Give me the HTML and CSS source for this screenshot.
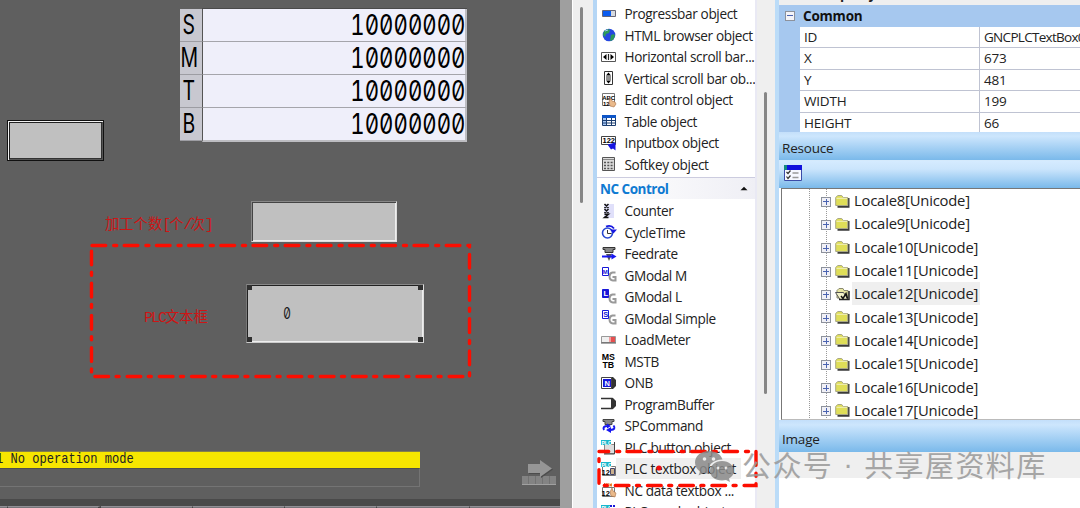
FILE: index.html
```
<!DOCTYPE html>
<html lang="zh-CN">
<head>
    <meta charset="UTF-8">
    <meta name="viewport" content="width=device-width, initial-scale=1.0">
    <title>Screen Editor</title>
    <link rel="stylesheet" href="styles.css">
</head>
<body>
<div class="editor">

  <!-- Screen canvas -->
  <div class="canvas">
    <div class="counter-table">
      <div class="row"><b class="key"><i>S</i></b><span class="val"><i>10000000</i></span></div>
      <div class="row"><b class="key"><i>M</i></b><span class="val"><i>10000000</i></span></div>
      <div class="row"><b class="key"><i>T</i></b><span class="val"><i>10000000</i></span></div>
      <div class="row"><b class="key"><i>B</i></b><span class="val"><i>10000000</i></span></div>
    </div>
    <div class="plc-button"></div>
    <div class="canvas-label label-count">加工个数<span>[</span>个<span>/</span>次<span>]</span></div>
    <div class="input-box"></div>
    <div class="canvas-label label-plc"><span>PLC</span>文本框</div>
    <div class="text-box"><i>0</i>
      <span class="handle tl"></span><span class="handle tr"></span>
      <span class="handle bl"></span><span class="handle br"></span>
    </div>
    <div class="message"><i>1 No operation mode</i></div>
    <div class="message-empty"></div>
    <svg class="next-icon" width="36" height="27" viewBox="0 0 36 27">
      <path d="M0 16h34v9H0z" fill="#838383"/>
      <path d="M6.500 16v8M13.500 16v8M20.500 16v8M27.500 16v8" stroke="#727272"/>
      <path d="M0 24.500h34" stroke="#a0a0a0"/>
      <path d="M6 4h12V0l12 8.500-12 8.500v-4H6z" fill="#4c4c4c" transform="translate(1 1)"/>
      <path d="M6 4h12V0l12 8.500-12 8.500v-4H6z" fill="#969696"/>
    </svg>
    <div class="softkeys"><span></span><span></span><span></span><span></span><span></span><span></span><span></span></div>
  </div>

  <div class="canvas-edge"></div>
  <div class="canvas-scroll"><div class="thumb"></div></div>

  <!-- Toolbox -->
  <div class="toolbox">
    <div class="tool-list">
      <div class="tool"><svg viewBox="0 0 16 16"><path d="M1.500 4.500h13v6h-13z" fill="#d5d9df" stroke="#667"/><path d="M2 5h8v5H2z" fill="#0b5cf0"/></svg>Progressbar object</div>
      <div class="tool"><svg viewBox="0 0 16 16"><circle cx="8" cy="8" r="6.300" fill="#2448e0"/><path d="M3 4l4-2 2 1-1 3-3 1-1 3-2-2zM10 8l3-1 1 2-2 4-3 1z" fill="#2c9a58"/><path d="M4 4l3-1" stroke="#9fd0ef"/></svg>HTML browser object</div>
      <div class="tool"><svg viewBox="0 0 16 16"><path d="M.5 3.500h14v9H.5z" fill="#fff" stroke="#555"/><path d="M5.500 5v6L2 8zM9.500 5v6L13 8z"/><path d="M7.500 5v6" stroke="#222" stroke-width="1.200"/></svg>Horizontal scroll bar...</div>
      <div class="tool"><svg viewBox="0 0 16 16"><path d="M3.500 1.500h8v13h-8z" fill="#fff" stroke="#333"/><path d="M5 5.500h5L7.500 2.500zM5 10.500h5l-2.500 3z"/><path d="M5 7h5M5 9h5" stroke="#222"/></svg>Vertical scroll bar ob...</div>
      <div class="tool"><svg viewBox="0 0 16 16"><path d="M1.500 1.500h12v12h-12z" fill="#fff" stroke="#777"/><text x="1.200" y="7.500">ABC</text><text x="2" y="13.500">12</text><path d="M9 14l-1-4 1-4 2 3 3 1 1 2-2 3z" fill="#e9b98a" stroke="#a86e45" stroke-width=".6"/></svg>Edit control object</div>
      <div class="tool"><svg viewBox="0 0 16 16"><path d="M1.500 2.500h13v10h-13z" fill="#fff" stroke="#1d3e70"/><path d="M1 2h14v3H1z" fill="#0d55c7"/><path d="M2 5h3v7H2z" fill="#a8c9f7"/><path d="M1 7.500h14M1 10h14M5.500 5v7M10.500 5v7" stroke="#1d3e70"/></svg>Table object</div>
      <div class="tool"><svg viewBox="0 0 16 16"><path d="M.5 1.500h14v8H.5z" fill="#fff" stroke="#444"/><text class="mid" x="1.500" y="8">122</text><path d="M6.500 9.500l8-2v8l-2.500-2-2 1z" fill="#1515e0"/></svg>Inputbox object</div>
      <div class="tool"><svg viewBox="0 0 16 16"><path d="M1.500 1.500h12v13h-12z" fill="#ddd" stroke="#555"/><path d="M2 3.500h11" stroke="#888"/><path d="M3 6.500h10M3 9.500h10M3 12.500h10" stroke="#555" stroke-width="1.500" stroke-dasharray="2 1.300"/></svg>Softkey object</div>
    </div>
    <div class="tool-head">NC Control<svg width="8" height="5" viewBox="0 0 8 5"><path d="M.5 4.200L4 .8l3.500 3.400z"/></svg></div>
    <div class="tool-list">
      <div class="tool"><svg viewBox="0 0 16 16"><path d="M3 1h10v14H3z" fill="#e0e0fa"/><path d="M3.500 1l4 4m0-4l-4 4M3.500 6l4 4m0-4l-4 4M3.500 11.200h4l-4 3.300h4" fill="none" stroke="#111" stroke-width="1.500"/></svg>Counter</div>
      <div class="tool"><svg viewBox="0 0 16 16"><circle cx="6.500" cy="9" r="5" fill="#fff" stroke="#2848d0" stroke-width="1.600"/><path d="M6.500 6v3.500h4" fill="none" stroke="#333"/><path d="M5 2.500q5-2 8 2" fill="none" stroke="#1717e0" stroke-width="1.800"/><path d="M9 5.500h7L12.500 9.500z" fill="#1717e0"/></svg>CycleTime</div>
      <div class="tool"><svg viewBox="0 0 16 16"><path d="M2 1.500h12v2h-2v3H4v-3H2z" fill="#888" stroke="#333"/><path d="M5 8h6l-3 7z" fill="#555"/><path d="M1 10.500h11" stroke="#1717f0" stroke-width="2"/><path d="M10.500 7.500l5 3-5 3z" fill="#1717f0"/></svg>Feedrate</div>
      <div class="tool"><svg viewBox="0 0 16 16"><path d="M14.500 5.500h-3q-3 .5-3 4t3.500 4h2.500v-3.500h-3" fill="none" stroke="#999" stroke-width="2"/><path d="M1.500.5h6v8h-6z" fill="#fff" stroke="#1717d8"/><text class="blue" x="1.800" y="7.200">M</text></svg>GModal M</div>
      <div class="tool"><svg viewBox="0 0 16 16"><path d="M14.500 5.500h-3q-3 .5-3 4t3.500 4h2.500v-3.500h-3" fill="none" stroke="#999" stroke-width="2"/><path d="M1.500.5h6v8h-6z" fill="#1717d8" stroke="#1717d8"/><text class="white mid" x="2.500" y="7.200">L</text></svg>GModal L</div>
      <div class="tool"><svg viewBox="0 0 16 16"><path d="M14.500 5.500h-3q-3 .5-3 4t3.500 4h2.500v-3.500h-3" fill="none" stroke="#999" stroke-width="2"/><path d="M1.500.5h6v8h-6z" fill="#fff" stroke="#1717d8"/><text class="blue mid" x="2.200" y="7.200">S</text></svg>GModal Simple</div>
      <div class="tool"><svg viewBox="0 0 16 16"><path d="M.5 4.500h14v6H.5z" fill="#f0f0f0" stroke="#999"/><path d="M8 5h6v5H8z" fill="#f0a0a0"/><path d="M10 5h4v5h-4z" fill="#e65050"/><path d="M0 11h15" stroke="#555"/></svg>LoadMeter</div>
      <div class="tool"><svg viewBox="0 0 16 16"><text class="big" x=".8" y="7.300">MS</text><text class="big" x="1.500" y="14.800">TB</text></svg>MSTB</div>
      <div class="tool"><svg viewBox="0 0 16 16"><path d="M10 2h2l3 3v6l-3 3h-2z" fill="#333"/><path d="M.5 2.500h10v11H.5z" fill="#fff" stroke="#444"/><path d="M2 4h8v8H2z" fill="#1717d8"/><text class="white mid" x="3.500" y="10.500">N</text></svg>ONB</div>
      <div class="tool"><svg viewBox="0 0 16 16"><path d="M0 2.500h11v10H0" fill="none" stroke="#333" stroke-width="1.400"/><path d="M10 2h2l3 3v5l-3 3h-2z" fill="#333"/></svg>ProgramBuffer</div>
      <div class="tool"><svg viewBox="0 0 16 16"><path d="M2 1.500h11v2h-2v3H4v-3H2z" fill="#888" stroke="#444"/><path d="M12.500 7.500q3 4-3 4.500M3 12q-2-4 4-4" fill="none" stroke="#1717f0" stroke-width="2"/><path d="M10 9v6l-5-3zM6 5.500v5l4-2.500z" fill="#1717f0"/></svg>SPCommand</div>
      <div class="tool"><svg viewBox="0 0 16 16"><path d="M3.500 5.500h10v9h-10z" fill="#ddd" stroke="#888"/><path d="M13.500 3v12H3" fill="none" stroke="#444"/><path d="M0 1h10v5H0z" fill="#18b7cc"/><text class="white" x=".5" y="5.500">PLC</text></svg>PLC button object</div>
      <div class="tool active"><svg viewBox="0 0 16 16"><path d="M1.500 5.500h13v9h-13z" fill="#fff" stroke="#777"/><path d="M0 1h10v5H0z" fill="#18b7cc"/><text class="white" x=".5" y="5.500">PLC</text><text class="mid" x=".5" y="13.500">12</text><path d="M9.500 7.500h4v6h-4z" fill="#cbb08c" stroke="#446"/></svg><span>PLC textbox object</span></div>
      <div class="tool"><svg viewBox="0 0 16 16"><path d="M1.500 5.500h12v9h-12z" fill="#fff" stroke="#777"/><path d="M3 1h8v4H3z" fill="#e46b22"/><text class="white" x="4" y="5">NC</text><text class="mid" x=".5" y="13.500">12</text><path d="M10 14l-1-4 2-4 1 3 3 2-1 4z" fill="#e9b98a" stroke="#a86e45" stroke-width=".6"/></svg>NC data textbox ...</div>
      <div class="tool"><svg viewBox="0 0 16 16"><path d="M0 1h9v5H0z" fill="#18b7cc"/><text class="white" x=".5" y="5.500">PLC</text><path d="M9 2h5M10 5h5" stroke="#1717d8" stroke-width="2" stroke-dasharray="2 1"/></svg>PLC graph object</div>
    </div>
  </div>
  <div class="tool-scroll"><div class="thumb"></div></div>

  <!-- Property, resource and image panels -->
  <div class="side">
    <div class="prop-top"><span>Property</span></div>
    <div class="props">
      <div class="prop-group"><span class="minus"></span>Common</div>
      <div class="prop"><span>ID</span><span class="id">GNCPLCTextBox0</span></div>
      <div class="prop"><span>X</span><span>673</span></div>
      <div class="prop"><span>Y</span><span>481</span></div>
      <div class="prop"><span>WIDTH</span><span>199</span></div>
      <div class="prop"><span>HEIGHT</span><span>66</span></div>
    </div>
    <div class="panel-title resource-title">Resouce</div>
    <div class="panel-bar">
      <svg width="18" height="16" viewBox="0 0 18 16"><path d="M.5.500h17v15H.5z" fill="#f6f8ff" stroke="#3b4ba8"/><path d="M0 0h18v5H0z" fill="#1010dc"/><path d="M0 0h3v5H0z" fill="#148a80"/><path d="M2.500 7l1.500 1.500 2.500-3M2.500 11.500l1.500 2 2.500-3" fill="none" stroke="#333" stroke-width="1.200"/><path d="M8.500 8h6M8.500 12.500h6" stroke="#999" stroke-width="1.300"/></svg>
    </div>
    <div class="tree">
      <div class="node"><span class="plus"></span><svg><use href="#folder"/></svg><span>Locale8[Unicode]</span></div>
      <div class="node"><span class="plus"></span><svg><use href="#folder"/></svg><span>Locale9[Unicode]</span></div>
      <div class="node"><span class="plus"></span><svg><use href="#folder"/></svg><span>Locale10[Unicode]</span></div>
      <div class="node"><span class="plus"></span><svg><use href="#folder"/></svg><span>Locale11[Unicode]</span></div>
      <div class="node selected"><span class="plus"></span><svg><use href="#folder-open"/></svg><span>Locale12[Unicode]</span></div>
      <div class="node"><span class="plus"></span><svg><use href="#folder"/></svg><span>Locale13[Unicode]</span></div>
      <div class="node"><span class="plus"></span><svg><use href="#folder"/></svg><span>Locale14[Unicode]</span></div>
      <div class="node"><span class="plus"></span><svg><use href="#folder"/></svg><span>Locale15[Unicode]</span></div>
      <div class="node"><span class="plus"></span><svg><use href="#folder"/></svg><span>Locale16[Unicode]</span></div>
      <div class="node"><span class="plus"></span><svg><use href="#folder"/></svg><span>Locale17[Unicode]</span></div>
    </div>
    <div class="panel-title image-title">Image</div>
    <div class="image-bar"></div>
  </div>
</div>

<!-- Red marks over the editor -->
<svg class="marks" width="1080" height="508" viewBox="0 0 1080 508">
  <path d="M92 245.500H469.500V376.500H91.500V246" stroke-dasharray="13.700 8 3 7.500"/>
  <path d="M599 451.500H756V485.500H599V452" stroke-dasharray="13.700 8 3 7.500" stroke-dashoffset="4"/>
  <circle cx="659" cy="468" r="2.600"/>
</svg>

<div class="watermark">
  <svg width="42" height="32" viewBox="0 0 42 32">
    <path d="M15 1c-8 0-14 5-14 11.500 0 4 2 7 5 9l-1.500 4 5-2.500 5 1c-2-8 4-14.500 14-14.500C27 4.500 22 1 15 1z"/>
    <path d="M28 11c-7 0-12 4.500-12 10s5 9.500 12 9.500l4-.5 4 2-1-3.500c3-2 5-4.500 5-7.500 0-5.500-5-10-12-10z"/>
    <g class="eyes"><circle cx="10.500" cy="9" r="1.800"/><circle cx="19.500" cy="9" r="1.800"/><circle cx="24" cy="18" r="1.500"/><circle cx="32" cy="18" r="1.500"/></g>
  </svg>
  <span>公众号</span><span class="dot">·</span><span>共享屋资料库</span>
</div>

<svg class="defs" width="0" height="0">
  <symbol id="folder" viewBox="0 0 16 14">
    <path d="M2.500 12.800h11V4" fill="none" stroke="#3a3a3a" stroke-width="2"/>
    <path d="M.7 11.500V3.500l2-2h4l1.500 2h4.500v8z" fill="#dfde58" stroke="#a9a886"/>
    <path d="M1.500 4.300h10.500" stroke="#f2f1c0"/>
  </symbol>
  <symbol id="folder-open" viewBox="0 0 16 14">
    <path d="M2 11V3.500l2-2h4l1 2h4V11z" fill="#e7e5a0" stroke="#8a8a70"/>
    <path d="M.5 5.500h8l4.500 7H5z" fill="#f3f2c8" stroke="#555"/>
    <path d="M4 12.500h10V4" fill="none" stroke="#222" stroke-width="1.500"/>
    <path d="M6 9l2 2.500 3-5 1.500 5" fill="none" stroke="#111" stroke-width="1.500"/>
  </symbol>
</svg>
</body>
</html>
```

FILE: styles.css
```
* {
    box-sizing: border-box;
}

body {
    margin: 0;
    width: 1080px;
    height: 508px;
    overflow: hidden;
    font-family: "Open Sans", "Noto Sans", sans-serif;
    color: #222;
    background-color: #efefef;
}

i {
    font-style: normal;
    display: inline-block;
}

.editor {
    display: flex;
    height: 508px;
}

/* Screen canvas */
.canvas {
    position: relative;
    width: 560px;
    flex: none;
    overflow: hidden;
    background-color: #5f5f5f;
}

.canvas-edge {
    width: 12px;
    flex: none;
    background-color: #9f9f9f;
}

.canvas-scroll {
    width: 21px;
    flex: none;
    padding: 7px 0 0 7px;
    background-color: #efefef;
    border-left: 1px solid #fff;
}

.thumb {
    width: 3px;
    border-radius: 2px;
    background-color: #868686;
}

.canvas-scroll .thumb {
    height: 196px;
}

.counter-table {
    position: absolute;
    left: 180px;
    top: 9px;
    width: 287px;
    height: 134px;
    font-family: Inter, sans-serif;
    font-feature-settings: "zero", "tnum";
    color: #000;
}

.counter-table .row {
    display: flex;
    height: 33px;
}

.counter-table .key {
    width: 22px;
    font-weight: 400;
    font-size: 27px;
    line-height: 32px;
    text-align: center;
    background-color: #c8c8d0;
    border-bottom: 1px solid #9d9da3;
}

.counter-table .key i {
    transform: translateX(-2px) scaleX(.72);
    margin: 0 -6px;
}

.counter-table .val {
    flex: 1;
    text-align: right;
    font-size: 29px;
    line-height: 32px;
    background-color: #efeffa;
    border-left: 1px solid #555;
    border-right: 2px solid #bdbdc2;
    border-bottom: 1px solid #a5a5ab;
}

.counter-table .val i {
    transform: scaleX(.765);
    transform-origin: right;
}

.counter-table .row:first-child .val {
    box-shadow: 0 -1px #4a4a4a;
}

.counter-table .row:last-child .val {
    height: 34px;
    border-bottom: 2px solid #bdbdc2;
}

.plc-button {
    position: absolute;
    left: 7px;
    top: 120px;
    width: 97px;
    height: 41px;
    background-color: #c0c0c0;
    border: 1px solid #111;
    box-shadow: inset 1px 1px #f2f2f2, inset -1px -1px #555, inset 2px 2px #222, inset -2px -2px #333;
}

.input-box {
    position: absolute;
    left: 251px;
    top: 201px;
    width: 146px;
    height: 41px;
    background-color: #c0c0c0;
    border: 1px solid;
    border-color: #888 #ddd #ddd #888;
    box-shadow: inset 1px 1px #444, inset -1px -1px #eee;
}

.canvas-label {
    position: absolute;
    color: #cd1515;
    font-family: "Noto Sans CJK SC", sans-serif;
    font-size: 14.300px;
    font-weight: 400;
    line-height: 20px;
    white-space: nowrap;
}

.canvas-label span {
    font-family: "Liberation Mono", monospace;
    font-size: 15px;
    letter-spacing: -2px;
}

.label-count {
    left: 105px;
    top: 213px;
}

.label-plc {
    left: 144px;
    top: 306px;
}

.text-box {
    position: absolute;
    left: 246px;
    top: 284px;
    width: 178px;
    height: 59px;
    background-color: #c0c0c0;
    border: 1px solid;
    border-color: #888 #ddd #ccc #777;
    box-shadow: inset 1px 1px #222, inset -1px -1px #eee;
}

.text-box i {
    font: 16px/20px Inter, sans-serif;
    font-feature-settings: "zero";
    margin: 18px 0 0 35px;
    transform: scaleX(.75);
}

.handle {
    position: absolute;
    width: 5px;
    height: 5px;
    background-color: #303030;
}

.tl { left: 0; top: 0; }
.tr { right: 0; top: 0; }
.bl { left: 0; bottom: 0; }
.br { right: 0; bottom: 0; }

.message {
    position: absolute;
    left: 0;
    top: 451px;
    width: 420px;
    height: 17px;
    background-color: #f7e600;
    border-top: 1px solid #85804a;
    font: 15px/16px "Liberation Mono", monospace;
    color: #222;
    white-space: nowrap;
}

.message i {
    margin-left: -4px;
    transform: scaleX(.805);
    transform-origin: left;
}

.message-empty {
    position: absolute;
    left: -1px;
    top: 468px;
    width: 421px;
    height: 19px;
    border: 1px solid #747474;
    border-top-color: #4e4e4e;
}

.next-icon {
    position: absolute;
    left: 522px;
    top: 460px;
}

.softkeys {
    position: absolute;
    left: -84px;
    top: 499px;
    width: 654px;
    height: 9px;
    display: flex;
    background-color: #4a4a4a;
    padding-top: 7px;
}

.softkeys span {
    width: 92.300px;
    flex: none;
    background-color: #77757a;
    border-top: 1px solid #929096;
    border-right: 1px solid #444;
}

.softkeys span:nth-child(2) {
    border-right-width: 3px;
}

/* Toolbox */
.toolbox {
    width: 164px;
    flex: none;
    height: 508px;
    overflow: hidden;
    padding-top: 3px;
    background-color: #fff;
    border-left: 4px solid #b5d6f5;
    border-right: 2px solid #e9e9f4;
}

.tool {
    display: flex;
    align-items: center;
    height: 21.500px;
    padding-left: 4px;
    font-size: 13.600px;
    letter-spacing: -.360px;
    white-space: nowrap;
}

.tool svg {
    width: 16px;
    height: 16px;
    flex: none;
    margin-right: 7.500px;
}

.tool text {
    font: bold 6px "Liberation Sans", sans-serif;
    letter-spacing: 0;
}

.tool text.big {
    font-size: 8.800px;
}

.tool .blue {
    fill: #1717d8;
}

.tool .white {
    fill: #fff;
    font-size: 5px;
}

.tool text.mid {
    font-size: 7.500px;
}

.tool.active span {
    height: 21px;
    line-height: 21px;
    margin-left: -9px;
    padding: 0 5px 0 9px;
    background-color: #efefef;
}

.tool-head {
    display: flex;
    align-items: center;
    justify-content: space-between;
    height: 22px;
    margin: 2px 0 1px;
    padding: 0 7px 0 3px;
    font-size: 13.500px;
    font-weight: 700;
    letter-spacing: -.500px;
    color: #0f7ad2;
    background: linear-gradient(90deg, #fff, #efeff5);
    border-top: 1px solid #ccccdf;
}

.tool-head svg {
    fill: #111;
}

.tool-scroll {
    width: 18px;
    flex: none;
    padding: 92px 0 0 7px;
    background-color: #efefef;
}

.tool-scroll .thumb {
    height: 302px;
}

/* Right panels */
.side {
    flex: 1;
    min-width: 0;
    height: 508px;
    overflow: hidden;
    background-color: #fff;
    border-left: 4px solid #bbdcf8;
}

.prop-top {
    height: 5px;
    overflow: hidden;
    background-color: #efefef;
}

.prop-top span {
    display: block;
    margin: -15px 0 0 38px;
    font-size: 13.500px;
    font-weight: 700;
    line-height: 18px;
}

.props {
    height: 127px;
    overflow: hidden;
    padding-left: 21px;
    background-color: #a6c8ef;
    font-size: 13.500px;
    letter-spacing: -.200px;
}

.prop-group {
    display: flex;
    align-items: center;
    height: 21.500px;
    margin-left: -15px;
    font-weight: 700;
    color: #111;
}

.minus, .plus {
    width: 10px;
    height: 10px;
    flex: none;
    border: 1px solid #8d929c;
    background: linear-gradient(#4a63b0, #4a63b0) center / 6px 1px no-repeat #f4f4f8;
}

.plus {
    background: linear-gradient(#4a63b0, #4a63b0) center / 6px 1px no-repeat,
                linear-gradient(#4a63b0, #4a63b0) center / 1px 6px no-repeat #f0f0f6;
}

.prop-group .minus {
    margin-right: 8px;
}

.prop {
    display: flex;
    height: 21.500px;
    line-height: 21px;
    background-color: #fff;
    border-bottom: 1px solid #bfc3d2;
}

.prop span {
    padding-left: 4px;
}

.prop span:first-child {
    width: 179px;
    flex: none;
}

.prop span:last-child {
    flex: 1;
    min-width: 0;
    border-left: 1px solid #bfc3d2;
}

.prop .id {
    letter-spacing: -.700px;
}

.panel-title {
    padding-left: 3px;
    font-size: 13.500px;
    letter-spacing: -.200px;
    background: linear-gradient(#c3dffa, #cde6fd 15%, #7ab9ea);
}

.resource-title {
    height: 29px;
    line-height: 32px;
    border-bottom: 1px solid #d5eafc;
}

.panel-bar {
    display: flex;
    align-items: center;
    height: 27px;
    padding: 0 0 3px 5px;
    background: linear-gradient(#d5ebff, #cbe5fc 30%, #7ab9ea);
}

/* Locale tree */
.tree {
    height: 232px;
    overflow: hidden;
    border-top: 1px solid #777;
    border-left: 1px solid #777;
    border-bottom: 1px solid #bbb;
    margin-left: 2px;
    background: repeating-linear-gradient(#999 0 1px, #fff 1px 2px) 27px 0 / 1px 100% no-repeat,
                repeating-linear-gradient(#999 0 1px, #fff 1px 2px) 44px 0 / 1px 100% no-repeat;
}

.node {
    display: flex;
    align-items: center;
    height: 23.300px;
    padding-left: 39px;
    font-size: 14.800px;
    letter-spacing: -.200px;
}

.node .plus {
    margin-top: 2px;
}

.node svg {
    width: 16px;
    height: 14px;
    flex: none;
    margin-left: 4px;
}

.node span:last-child {
    height: 23px;
    line-height: 23px;
    padding: 0 2px;
    margin-left: 1px;
}

.node.selected span:last-child {
    background-color: #efefef;
}

.image-title {
    height: 32px;
    line-height: 39px;
}

.image-bar {
    height: 26px;
    background-color: #efefef;
}

/* Overlays */
.marks {
    position: absolute;
    left: 0;
    top: 0;
}

.marks path {
    fill: none;
    stroke: #fc0d00;
    stroke-width: 3.400;
    stroke-linecap: round;
}

.marks circle {
    fill: #f01010;
}

.watermark {
    position: absolute;
    left: 694px;
    top: 448px;
    display: flex;
    align-items: center;
    height: 32px;
    font: 400 29px/32px "Noto Sans CJK SC", sans-serif;
    letter-spacing: 1.400px;
    color: #999;
    white-space: nowrap;
    opacity: .850;
}

.watermark svg {
    margin: 4px 6px 0 0;
    fill: #8a8a8a;
}

.watermark .eyes {
    fill: #eee;
}

.watermark .dot {
    width: 31px;
    text-align: center;
    font-family: "Liberation Sans", sans-serif;
}

.defs {
    position: absolute;
}
```
